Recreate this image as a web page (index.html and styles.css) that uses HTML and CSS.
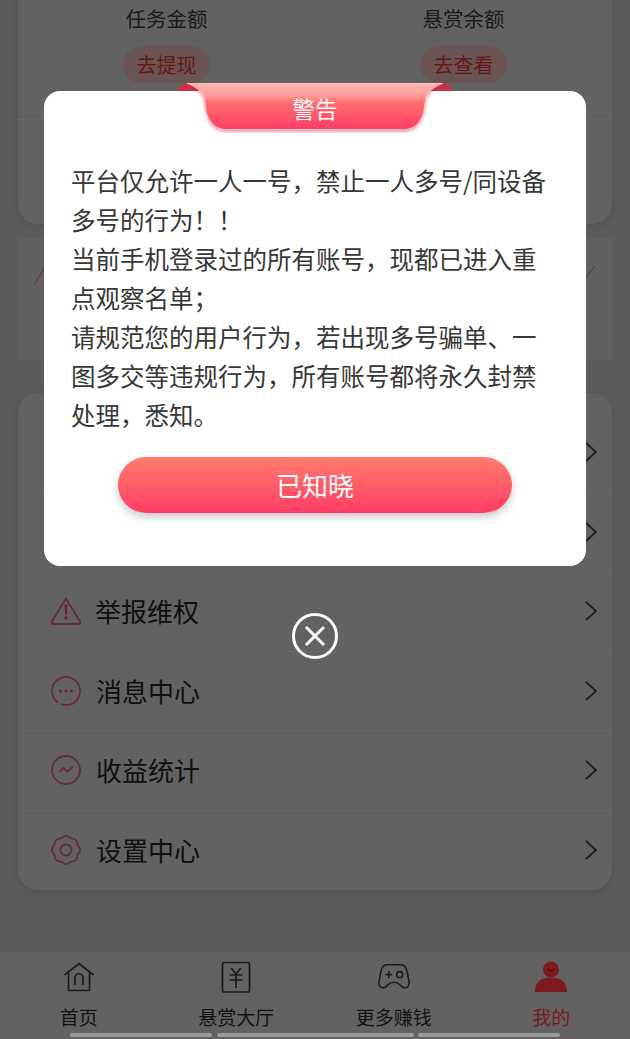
FILE: index.html
```html
<!DOCTYPE html>
<html lang="zh">
<head>
<meta charset="utf-8">
<title>警告</title>
<link rel="stylesheet" href="styles.css">
</head>
<body>
<div class="page">
  <section class="card wallet">
    <div class="wallet-cols">
      <div class="wallet-col"><span class="wallet-label">任务金额</span><span class="pill">去提现</span></div>
      <div class="wallet-col"><span class="wallet-label">悬赏余额</span><span class="pill">去查看</span></div>
    </div>
    <div class="wallet-divider"></div>
  </section>

  <section class="banner">
    <svg class="slash" width="12" height="20" viewBox="0 0 12 20"><path d="M1 19 11 2" /></svg>
    <svg class="slash" width="12" height="14" viewBox="0 0 12 14"><path d="M1 13 11 1" /></svg>
  </section>

  <section class="card menu">
    <div class="row"><span class="row-main"></span><svg class="chev" width="14" height="22" viewBox="0 0 14 22"><path d="M2 2l10 9-10 9"/></svg></div>
    <div class="row"><span class="row-main"></span><svg class="chev" width="14" height="22" viewBox="0 0 14 22"><path d="M2 2l10 9-10 9"/></svg></div>
    <div class="row">
      <span class="row-main">
        <svg class="row-icon" width="32" height="30" viewBox="0 0 32 30"><path d="M16 2.500 30 25.500q.8 2.500-2 2.500H4q-2.800 0-2-2.500z"/><path class="fill" d="M14.500 8.500h3l-.6 10h-1.800z"/><circle class="fill" cx="16" cy="22" r="1.800"/></svg>
        <span class="row-label label-a">举报维权</span>
      </span>
      <svg class="chev" width="14" height="22" viewBox="0 0 14 22"><path d="M2 2l10 9-10 9"/></svg>
    </div>
    <div class="row">
      <span class="row-main">
        <svg class="row-icon" width="32" height="32" viewBox="0 0 32 32"><path d="M8 27.500A14 14 0 1 1 16 30q-3 0-5-1"/><circle class="fill" cx="10.500" cy="16" r="1.500"/><circle class="fill" cx="16" cy="16" r="1.500"/><circle class="fill" cx="21.500" cy="16" r="1.500"/></svg>
        <span class="row-label">消息中心</span>
      </span>
      <svg class="chev" width="14" height="22" viewBox="0 0 14 22"><path d="M2 2l10 9-10 9"/></svg>
    </div>
    <div class="row">
      <span class="row-main">
        <svg class="row-icon" width="32" height="32" viewBox="0 0 32 32"><circle cx="16" cy="16" r="14"/><path d="M9 18l4.500-4 4 3.500 5.500-5"/></svg>
        <span class="row-label">收益统计</span>
      </span>
      <svg class="chev" width="14" height="22" viewBox="0 0 14 22"><path d="M2 2l10 9-10 9"/></svg>
    </div>
    <div class="row">
      <span class="row-main">
        <svg class="row-icon" width="32" height="32" viewBox="0 0 32 32"><path d="M27.550 20.790Q32.500 16 27.550 11.210 27.670 4.330 20.790 4.450 16 -.5 11.210 4.450 4.330 4.330 4.450 11.210-.5 16 4.450 20.790 4.330 27.670 11.210 27.550 16 32.500 20.790 27.550 27.670 27.670 27.550 20.790Z"/><circle cx="16" cy="16" r="5.500"/></svg>
        <span class="row-label">设置中心</span>
      </span>
      <svg class="chev" width="14" height="22" viewBox="0 0 14 22"><path d="M2 2l10 9-10 9"/></svg>
    </div>
  </section>

  <nav class="nav">
    <div class="tabs">
      <div class="tab">
        <svg class="tab-icon" width="32" height="30" viewBox="0 0 32 30"><path d="M1.500 13 16 1.500 30.500 13"/><path d="M5.500 11v17.500h21V11"/><path d="M12 23v-7q0-4 4-4t4 4v7"/></svg>
        <span>首页</span>
      </div>
      <div class="tab">
        <svg class="tab-icon" width="32" height="32" viewBox="0 0 32 32"><rect x="2.500" y="1.500" width="27" height="29.500" rx="2"/><path d="M11 7l5 6 5-6M9.500 14h13M9.500 19h13M16 13v14"/></svg>
        <span>悬赏大厅</span>
      </div>
      <div class="tab">
        <svg class="tab-icon" width="32" height="32" viewBox="0 0 34 32"><path d="M10 3h14q5 0 6.500 5.500L33 21q.5 6-4 6.500-3 .3-6-3.500-2-2.500-6-2.500t-6 2.500q-3 3.800-6 3.500Q.5 27 1 21L3.500 8.500Q5 3 10 3z"/><path d="M8 13.500h7M11.500 10v7"/><circle cx="23" cy="13.500" r="3.200"/></svg>
        <span>更多赚钱</span>
      </div>
      <div class="tab tab-active">
        <svg class="tab-icon" width="32" height="32" viewBox="0 0 32 32"><path class="solid" d="M0 31q0-14.500 16-14.500T32 31z"/><circle class="solid" cx="16" cy="8.500" r="8"/><path class="smile" d="M12.500 7.500q3.500 4.500 7 0"/></svg>
        <span>我的</span>
      </div>
    </div>
    <div class="home-bars"><i class="bar-a"></i><i class="bar-b"></i><i class="bar-a"></i></div>
  </nav>
</div>

<div class="layer">
  <div class="modal">
    <svg class="ribbon" width="276" height="50" viewBox="0 0 276 50">
      <defs>
        <linearGradient id="rib" x1="0" y1="0" x2="0" y2="1">
          <stop offset="0" stop-color="#ffb9b2"/>
          <stop offset=".28" stop-color="#ff9a96"/>
          <stop offset=".42" stop-color="#ff6f72"/>
          <stop offset="1" stop-color="#ff3c64"/>
        </linearGradient>
        <filter id="ribshadow" x="-10%" y="-10%" width="120%" height="130%"><feDropShadow dx="0" dy="2" stdDeviation="1.500" flood-color="#b03040" flood-opacity=".45"/></filter>
      </defs>
      <path d="M10 0Q3 2 0 6q0 2 3 2h270q3 0 3-2-3-4-10-6z" fill="#c92f4a"/>
      <path filter="url(#ribshadow)" d="M10 0H266C254 5 249 10 248 20 247 37 239 46.500 227 46.500H49C37 46.500 29 37 28 20 27 10 22 5 10 0Z" fill="url(#rib)" stroke="#ffc0c0" stroke-width="1"/>
    </svg>
    <h2 class="ribbon-title">警告</h2>
    <div class="modal-text">
      <p>平台仅允许一人一号，禁止一人多号/同设备多号的行为！！</p>
      <p>当前手机登录过的所有账号，现都已进入重点观察名单；</p>
      <p>请规范您的用户行为，若出现多号骗单、一图多交等违规行为，所有账号都将永久封禁处理，悉知。</p>
    </div>
    <button class="ok" type="button">已知晓</button>
  </div>
  <svg class="close" width="46" height="46" viewBox="0 0 46 46"><circle cx="23" cy="23" r="21.500"/><path d="M14 14l18 18M32 14l-18 18"/></svg>
</div>
</body>
</html>
```

FILE: styles.css
```css
* { box-sizing: border-box; }
html, body { margin: 0; padding: 0; }
body {
  width: 630px;
  height: 1039px;
  overflow: hidden;
  position: relative;
  background: #5b5b5b;
  font-family: "Noto Sans CJK SC", "Noto Sans", sans-serif;
  color: #141414;
}
.page { display: flex; flex-direction: column; height: 1039px; }

.card {
  margin: 0 18px;
  background: #626262;
  border-radius: 20px;
  box-shadow: 0 2px 6px rgba(0, 0, 0, .12);
}
.wallet { margin-top: -20px; height: 244px; flex: none; padding-top: 24px; }
.wallet-cols { display: flex; padding: 0 105px; justify-content: space-between; }
.wallet-col { display: flex; flex-direction: column; align-items: center; gap: 14px; width: 87px; }
.wallet-label { font-size: 20.500px; line-height: 28px; color: #1a1a1a; white-space: nowrap; }
.pill {
  width: 87px;
  height: 37px;
  border-radius: 19px;
  background: #6a5454;
  color: #661719;
  font-size: 20px;
  line-height: 37px;
  text-align: center;
}
.wallet-divider { height: 1px; background: #6a6a6a; margin-top: 36px; }

.banner {
  flex: none;
  height: 122px;
  margin: 14px 18px 0;
  padding: 27px 16px 0;
  background: #606060;
  display: flex;
  justify-content: space-between;
  align-items: flex-start;
}
.slash path { stroke: #6a3d43; stroke-width: 1.500; fill: none; }

.menu { flex: none; height: 497px; margin-top: 33px; padding-top: 20px; }
.row {
  height: 79.500px;
  display: flex;
  align-items: center;
  justify-content: space-between;
  padding: 0 14px 0 32px;
  border-bottom: 1px solid #686868;
}
.row:last-child { border-bottom: 0; }
.row-main { display: flex; align-items: center; gap: 14px; }
.row-icon { fill: none; stroke: #652c33; stroke-width: 1.800; flex: none; }
.row-icon .fill { fill: #702029; stroke: none; }
.row-label { font-size: 26px; line-height: 36px; color: #101010; }
.label-a { margin-left: -1px; }
.chev { fill: none; stroke: #1e1e1e; stroke-width: 1.800; flex: none; }

.nav { flex: none; margin-top: 62px; height: 87px; background: #626262; padding-top: 9px; }
.tabs { display: grid; grid-template-columns: repeat(4, 157.500px); }
.tab { display: flex; flex-direction: column; align-items: center; height: 68px; justify-content: space-between; font-size: 19px; line-height: 24px; color: #131313; }
.tab-icon { fill: none; stroke: #1c1c1c; stroke-width: 1.700; height: 32px; flex: none; }
.tab-active { color: #761b1f; }
.tab-active .solid { fill: #7e191d; stroke: none; }
.tab-active .smile { stroke: #4a1012; stroke-width: 1.500; fill: none; }
.home-bars { display: flex; gap: 4.500px; padding: 0 70px; margin-top: 4px; }
.home-bars i { display: block; height: 4px; background: #9a9a9a; border-radius: 2px; }
.bar-a { width: 142px; }
.bar-b { width: 197px; }

.layer {
  position: absolute;
  inset: 0;
  display: flex;
  flex-direction: column;
  align-items: center;
  padding-top: 91px;
}
.modal {
  position: relative;
  width: 542px;
  height: 475px;
  background: #fff;
  border-radius: 16px;
  padding: 69.500px 27px 0;
  display: flex;
  flex-direction: column;
  align-items: stretch;
}
.ribbon { position: absolute; left: 133px; top: -8px; }
.ribbon-title {
  position: absolute;
  left: 133px;
  top: 0;
  width: 276px;
  margin: 0;
  text-align: center;
  color: #fff;
  font-size: 22.500px;
  font-weight: 400;
  line-height: 34px;
}
.modal-text { font-size: 24.500px; line-height: 39px; color: #383838; }
.modal-text p { margin: 0; }
.ok {
  display: block;
  align-self: center;
  width: 394px;
  height: 56px;
  margin-top: 23.500px;
  border: 0;
  border-radius: 28px;
  background: linear-gradient(#ff7d6c, #ff3d66);
  box-shadow: 0 4px 9px rgba(60, 60, 60, .28);
  color: #fff;
  font: 400 26px/56px "Noto Sans CJK SC", sans-serif;
  padding: 0;
}
.close { margin-top: 47px; fill: none; stroke: #fff; stroke-width: 3; flex: none; }
```
